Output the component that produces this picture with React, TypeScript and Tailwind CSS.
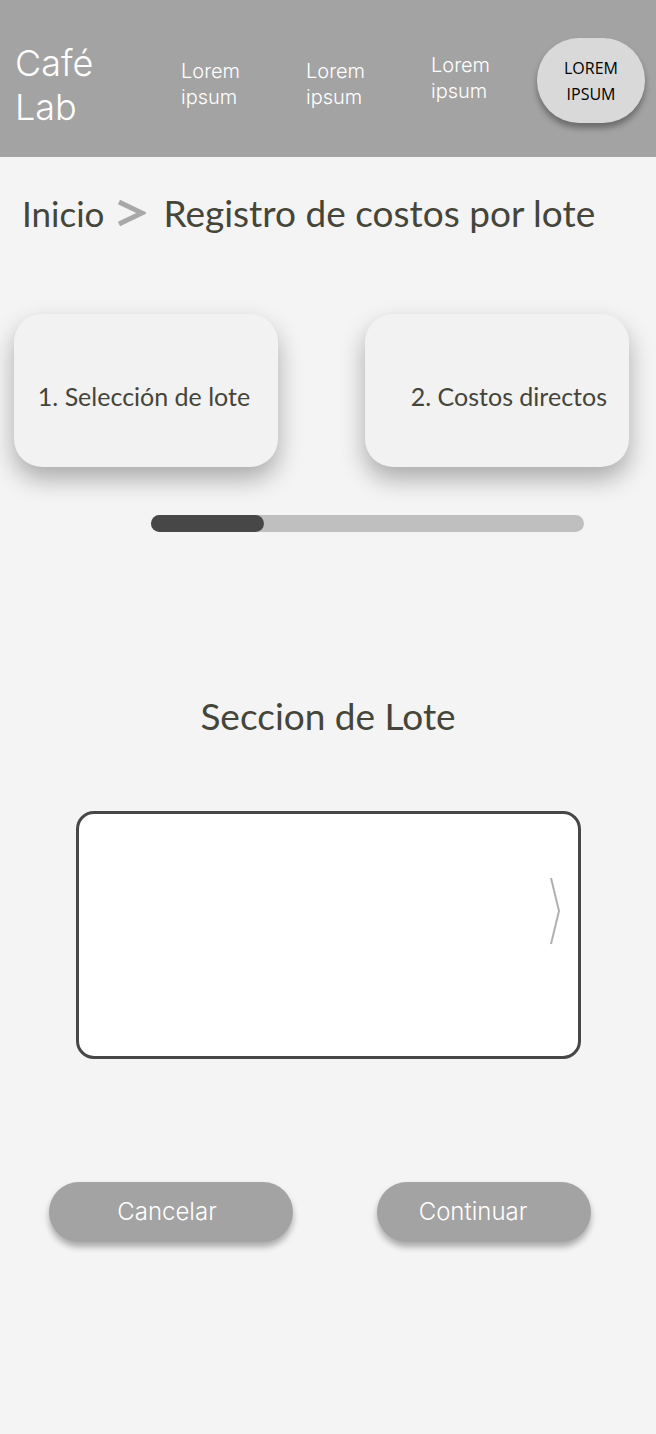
import React from 'react';

const navItems = ['Lorem ipsum', 'Lorem ipsum', 'Lorem ipsum'];

const App: React.FC = () => {
  return (
    <div className="min-h-[1434px] w-[656px] bg-[#f4f4f4] font-['Lato','Noto_Sans',sans-serif]">
      <header className="h-[157px] bg-[#a3a3a3] flex items-center pl-[15px] pr-[11px] pt-[10px]">
        <p className="shrink-0 font-['Inter',sans-serif] font-light text-[36px] leading-[44px] text-white w-[166px] pt-[2px]">
          Café
          <br />
          Lab
        </p>
        <div className="flex shrink-0">
          {navItems.map((item, i) => (
            <a
              key={i}
              href="#"
              className={`font-['Inter',sans-serif] font-light text-[20px] leading-[26px] text-white ${i === 2 ? '-mt-[6px] w-[106px]' : 'w-[125px]'}`}
            >
              Lorem
              <br />
              ipsum
            </a>
          ))}
        </div>
        <button className="shrink-0 -mt-[6px] w-[108px] h-[85px] rounded-[42px] bg-[#d9d9d9] shadow-[0_5px_6px_rgba(0,0,0,0.35)] font-['Open_Sans',sans-serif] text-[16px] leading-[26px] text-black">
          LOREM
          <br />
          IPSUM
        </button>
      </header>

      <div className="flex items-center pl-[22px] pt-[36px] text-[37px] leading-[40px] text-[#45453a]">
        <span className="text-[35px]">Inicio</span>
        <svg width="30" height="30" viewBox="0 0 30 30" className="ml-[12px] mr-[17px]">
          <path d="M3 4 L26 15 L3 26" fill="none" stroke="#a8a8a8" strokeWidth="5" />
        </svg>
        <span>Registro de costos por lote</span>
      </div>

      <div className="flex justify-between px-[14px] pt-[81px] pr-[27px]">
        <div className="w-[264px] h-[153px] rounded-[28px] bg-[#f2f2f2] shadow-[0_12px_24px_rgba(0,0,0,0.3)] flex items-center justify-center pt-[12px] pr-[4px] text-[25px] text-[#45453a]">
          1. Selección de lote
        </div>
        <div className="w-[264px] h-[153px] rounded-[28px] bg-[#f2f2f2] shadow-[0_12px_24px_rgba(0,0,0,0.3)] flex items-center justify-end pt-[12px] pr-[22px] text-[25px] text-[#45453a]">
          2. Costos directos
        </div>
      </div>

      <div className="ml-[151px] mt-[48px] w-[433px] h-[17px] rounded-full bg-[#bfbfbf]">
        <div className="w-[113px] h-full rounded-full bg-[#474747]" />
      </div>

      <h2 className="mt-[164px] text-center text-[37px] leading-[40px] text-[#45453a]">Seccion de Lote</h2>

      <div className="ml-[76px] mt-[75px] w-[505px] h-[248px] rounded-[18px] border-[3px] border-[#474747] bg-white flex items-start justify-end pt-[63px] pr-[16px]">
        <svg width="14" height="68" viewBox="0 0 14 68">
          <path d="M3 1 L11 34 L3 67" fill="none" stroke="#b0b0b0" strokeWidth="2" />
        </svg>
      </div>

      <div className="flex mt-[123px] pl-[49px]">
        <button className="w-[244px] h-[60px] rounded-[30px] bg-[#a3a3a3] shadow-[0_5px_6px_rgba(0,0,0,0.3)] font-['Inter',sans-serif] font-light text-[24px] text-white pr-[8px]">
          Cancelar
        </button>
        <button className="ml-[84px] w-[214px] h-[60px] rounded-[30px] bg-[#a3a3a3] shadow-[0_5px_6px_rgba(0,0,0,0.3)] font-['Inter',sans-serif] font-light text-[24px] text-white pr-[22px]">
          Continuar
        </button>
      </div>
    </div>
  );
};

export default App;
